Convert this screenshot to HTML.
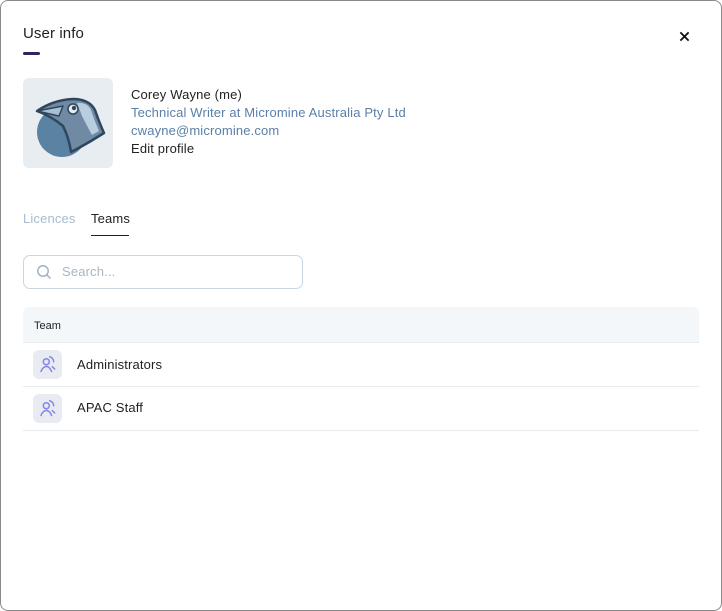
<!DOCTYPE html>
<html><head><style>
*{box-sizing:border-box;margin:0;padding:0}
body{width:722px;height:611px;background:#fff;font-family:"Liberation Sans",sans-serif;color:#1f2a37;position:relative;overflow:hidden}
.frame{position:absolute;left:0;top:0;width:722px;height:611px;border:1px solid #8a8a8a;border-radius:8px}
.abs{position:absolute}
.t{font-size:13px;line-height:18px;white-space:nowrap;letter-spacing:0.15px}
</style></head><body>
<div class="frame"></div>
<div class="abs" style="left:23px;top:25px;font-size:15px;color:#222;letter-spacing:0.1px">User info</div>
<div class="abs" style="left:23px;top:52px;width:17px;height:3px;border-radius:2px;background:#2e2660"></div>
<svg class="abs" style="left:679px;top:31px" width="11" height="11" viewBox="0 0 12 12"><path d="M1.5 1.5L10.5 10.5M10.5 1.5L1.5 10.5" stroke="#111" stroke-width="2"/></svg>
<div class="abs" style="left:23px;top:78px;width:90px;height:90px;background:#e8edf2;border-radius:6px"></div>
<svg class="abs" style="left:23px;top:78px" width="90" height="90" viewBox="0 0 90 90">
<circle cx="39" cy="54" r="25" fill="#5a83a3"/>
<path d="M14 33 Q30 22 50 21 Q66 21 72 32 Q76 44 81 55 L68 63 Q56 70 48 74 Q46 60 40 48 Q28 38 14 33Z" fill="#6f8aa2" stroke="#2f475c" stroke-width="2.5" stroke-linejoin="round"/>
<path d="M54 25 Q64 24 68 32 Q72 44 76 53 L69 57 Q63 46 59 38 Z" fill="#b7cde0"/>
<path d="M14 33 L40 28 L36 38 Z" fill="#a9bfd3" stroke="#2f475c" stroke-width="1.5" stroke-linejoin="round"/>
<circle cx="50" cy="31" r="5" fill="#e8edf2" stroke="#2f475c" stroke-width="1.5"/>
<circle cx="51" cy="30" r="2.2" fill="#2f475c"/>
</svg>
<div class="abs t" style="left:131px;top:86px;color:#222">Corey Wayne (me)</div>
<div class="abs t" style="left:131px;top:104px;color:#5a7fa8">Technical Writer at Micromine Australia Pty Ltd</div>
<div class="abs t" style="left:131px;top:122px;color:#5a7fa8">cwayne@micromine.com</div>
<div class="abs t" style="left:131px;top:140px;color:#222">Edit profile</div>
<div class="abs t" style="left:23px;top:210px;color:#a8bccf">Licences</div>
<div class="abs t" style="left:91px;top:210px;color:#222">Teams</div>
<div class="abs" style="left:91px;top:235px;width:38px;height:1px;background:#222"></div>
<div class="abs" style="left:23px;top:255px;width:280px;height:34px;border:1px solid #c9d6e2;border-radius:7px"></div>
<svg class="abs" style="left:36px;top:264px" width="16" height="16" viewBox="0 0 16 16"><circle cx="7" cy="7" r="5.2" fill="none" stroke="#9fb4c8" stroke-width="1.5"/><path d="M11 11L14.5 14.5" stroke="#9fb4c8" stroke-width="1.5"/></svg>
<div class="abs t" style="left:62px;top:263px;color:#a9b6c3">Search...</div>
<div class="abs" style="left:23px;top:307px;width:676px;height:36px;background:#f4f7fa;border-radius:6px 6px 0 0;border-bottom:1px solid #e6ebf0"></div>
<div class="abs" style="left:34px;top:318px;font-size:11px;line-height:16px;color:#222">Team</div>
<div class="abs" style="left:23px;top:386px;width:676px;height:1px;background:#e6ebf0"></div>
<div class="abs" style="left:23px;top:430px;width:676px;height:1px;background:#e6ebf0"></div>
<div class="abs" style="left:33px;top:350px;width:29px;height:29px;background:#e8ebf2;border-radius:6px"></div>
<div class="abs" style="left:33px;top:394px;width:29px;height:29px;background:#e8ebf2;border-radius:6px"></div>
<svg class="abs" style="left:33px;top:350px" width="29" height="29" viewBox="0 0 29 29"><g fill="none" stroke="#8b82e6" stroke-width="1.5" stroke-linecap="round"><circle cx="13.3" cy="11.7" r="3"/><path d="M8 21.5Q10 16.5 13.3 16.5Q16.6 16.5 18.6 21.5"/><path d="M16.7 6.7Q20.5 8 20.7 11.7M19.3 16.7L21.7 19"/></g></svg>
<svg class="abs" style="left:33px;top:394px" width="29" height="29" viewBox="0 0 29 29"><g fill="none" stroke="#8b82e6" stroke-width="1.5" stroke-linecap="round"><circle cx="13.3" cy="11.7" r="3"/><path d="M8 21.5Q10 16.5 13.3 16.5Q16.6 16.5 18.6 21.5"/><path d="M16.7 6.7Q20.5 8 20.7 11.7M19.3 16.7L21.7 19"/></g></svg>
<div class="abs t" style="left:77px;top:356px;color:#222">Administrators</div>
<div class="abs t" style="left:77px;top:399px;color:#222">APAC Staff</div>
</body></html>
